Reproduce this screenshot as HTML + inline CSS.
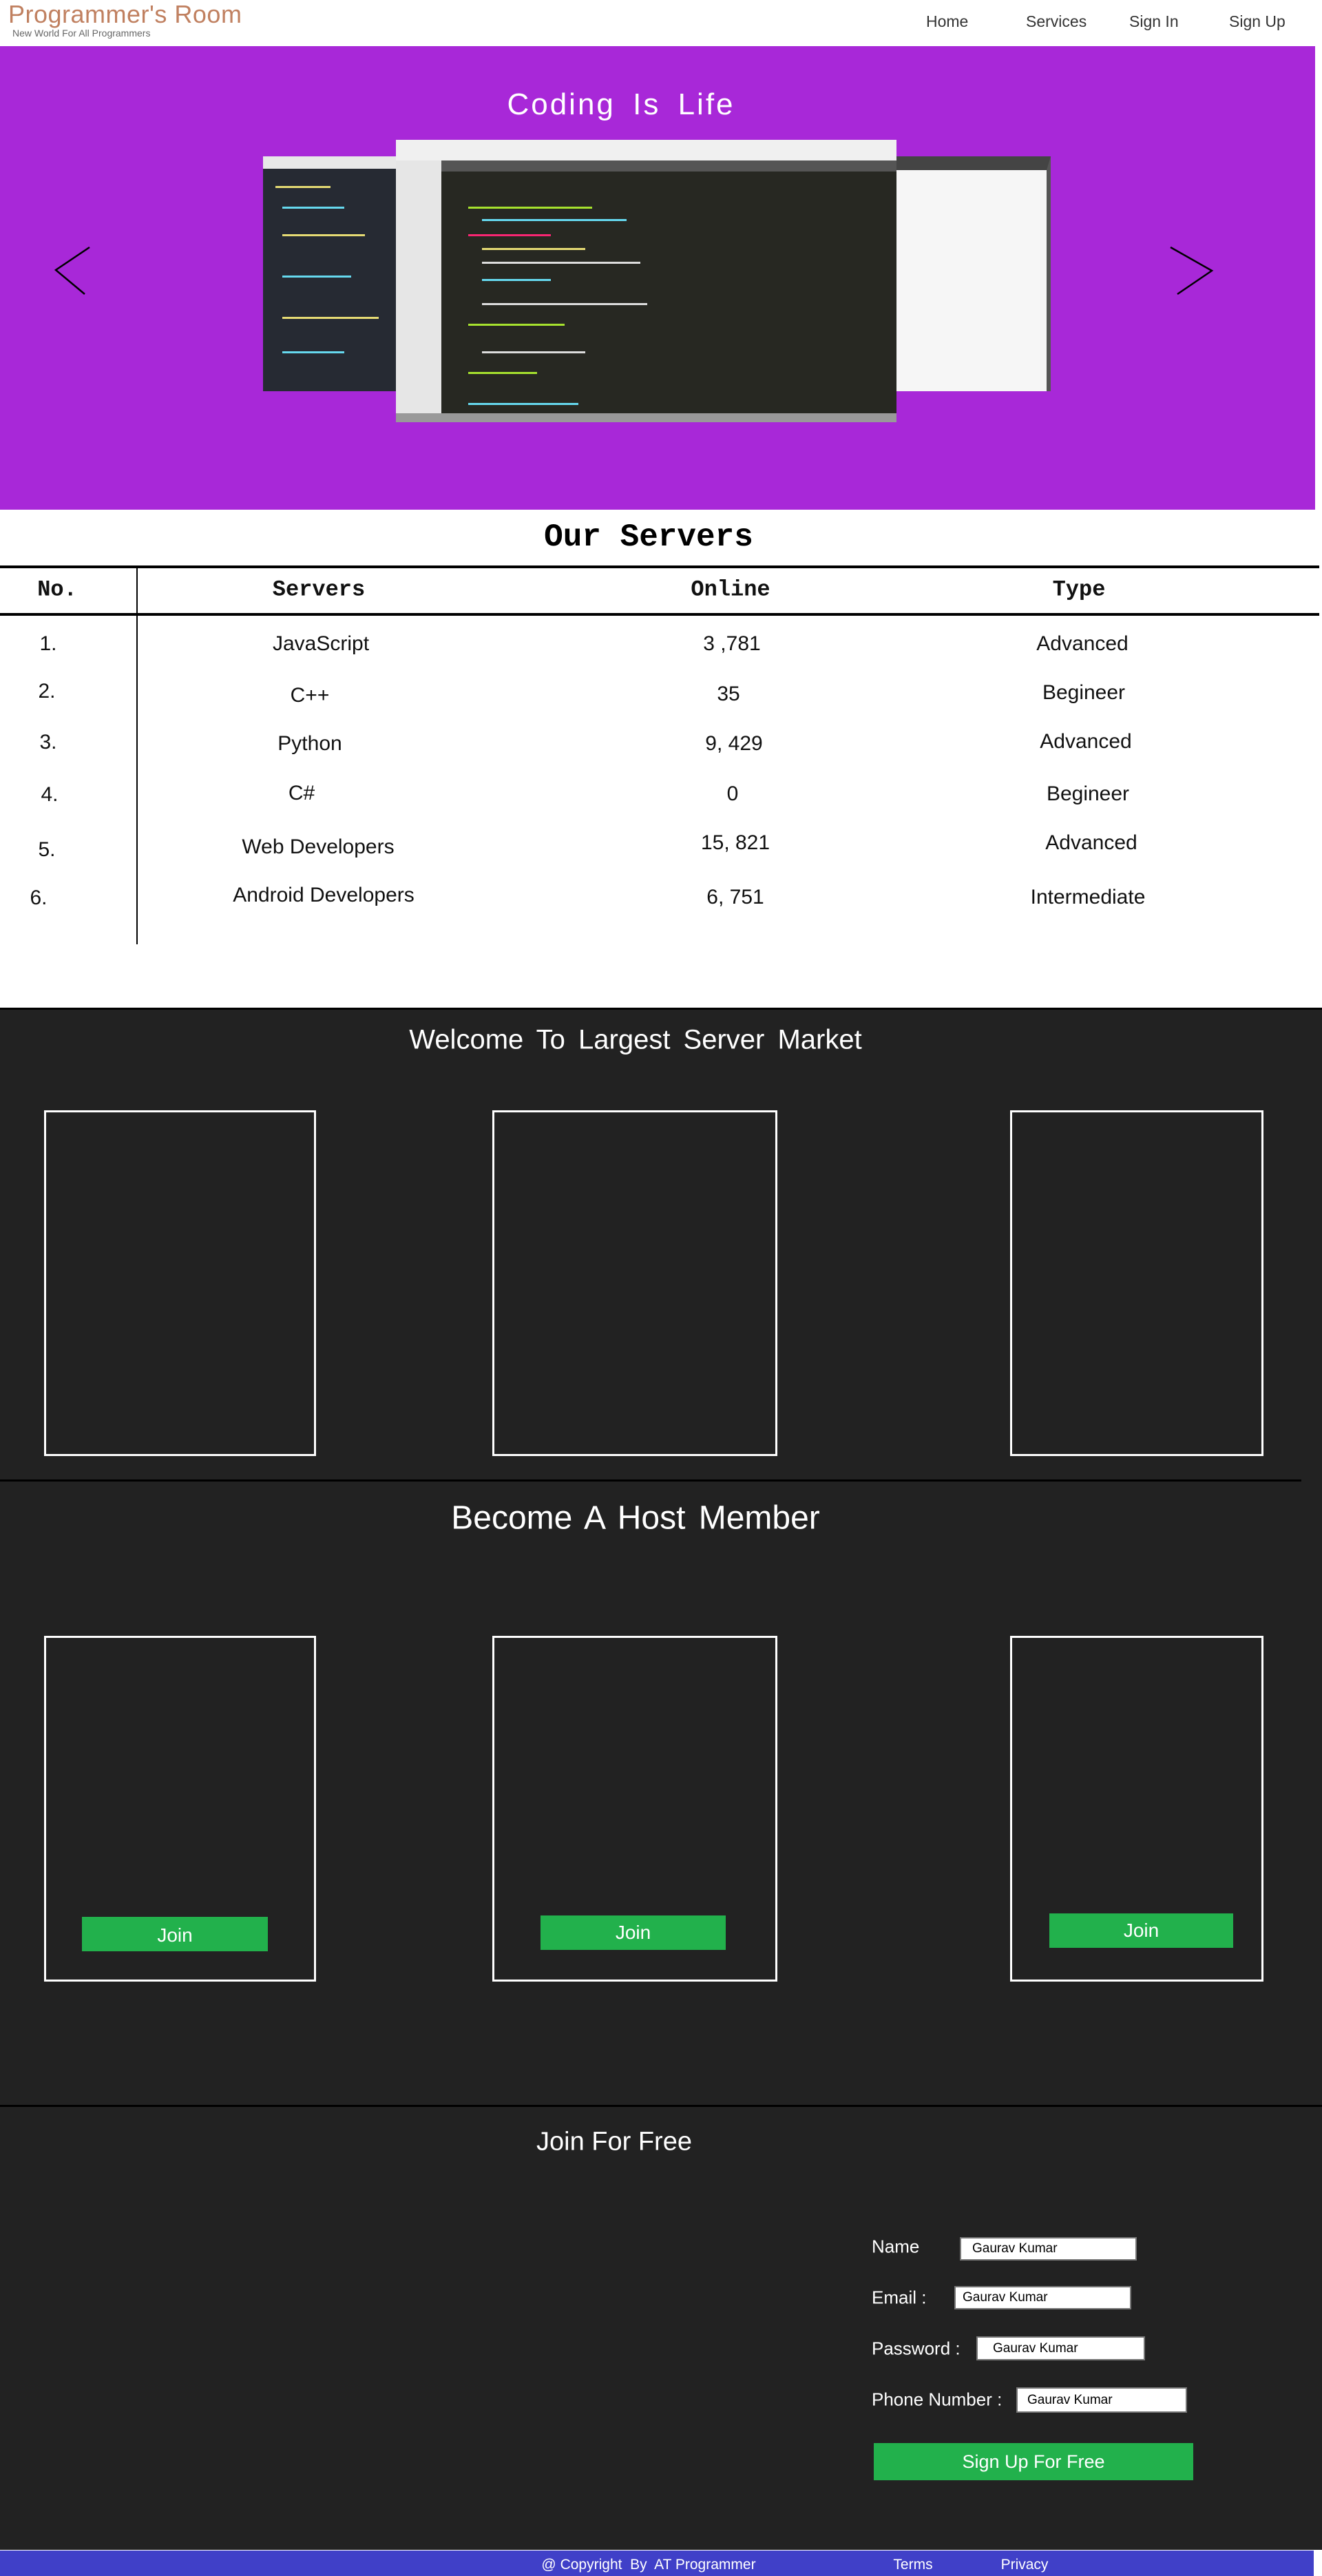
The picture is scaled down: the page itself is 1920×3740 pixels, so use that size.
<!DOCTYPE html>
<html><head><meta charset="utf-8">
<style>
*{margin:0;padding:0;box-sizing:border-box}
body{width:1920px;height:3740px;position:relative;background:#fff;font-family:"Liberation Sans","DejaVu Sans",sans-serif;overflow:hidden}
.a{position:absolute}
.c{position:absolute;transform:translate(-50%,-50%);white-space:nowrap}
.nav{font-size:23px;color:#333;top:18px}
.th{font-family:"Liberation Mono",monospace;font-weight:bold;font-size:32px;color:#111}
.td{font-size:30px;color:#111}
.card{position:absolute;border:3px solid #fff}
.join{position:absolute;background:#22b14c;color:#fff;font-size:28px;text-align:center}
.lbl{position:absolute;color:#fff;font-size:26px;transform:translateY(-50%)}
.inp{position:absolute;background:#fff;border:2px solid #777;font-size:19px;color:#000;padding-left:14px;display:flex;align-items:center}
.code{position:absolute;height:3px}
</style></head><body>
<div class="a" style="left:12px;top:0;font-size:36px;color:#c08060;letter-spacing:0.5px">Programmer's Room</div>
<div class="a" style="left:18px;top:40px;font-size:14px;color:#666">New World For All Programmers</div>
<div class="a nav" style="left:1345px">Home</div>
<div class="a nav" style="left:1490px">Services</div>
<div class="a nav" style="left:1640px">Sign In</div>
<div class="a nav" style="left:1785px">Sign Up</div>

<div class="a" style="left:0;top:67px;width:1910px;height:673px;background:#a828d8"></div>
<div class="c" style="left:902px;top:152px;font-size:44px;color:#fff;letter-spacing:3px;word-spacing:10px">Coding Is Life</div>
<svg class="a" style="left:75px;top:355px" width="60" height="75"><polyline points="55,4 6,37 48,72" fill="none" stroke="#000" stroke-width="2.5"/></svg>
<svg class="a" style="left:1695px;top:355px" width="70" height="75"><polyline points="5,4 65,38 15,72" fill="none" stroke="#000" stroke-width="2.5"/></svg>
<div class="a" style="left:382px;top:227px;width:200px;height:341px;background:#262a33"></div>
<div class="a" style="left:382px;top:227px;width:200px;height:18px;background:#e8e8e8"></div>
<div class="code" style="left:400px;top:270px;width:80px;background:#e6db74"></div>
<div class="code" style="left:410px;top:300px;width:90px;background:#66d9ef"></div>
<div class="code" style="left:410px;top:340px;width:120px;background:#e6db74"></div>
<div class="code" style="left:410px;top:400px;width:100px;background:#66d9ef"></div>
<div class="code" style="left:410px;top:460px;width:140px;background:#e6db74"></div>
<div class="code" style="left:410px;top:510px;width:90px;background:#66d9ef"></div>
<div class="a" style="left:1302px;top:227px;width:224px;height:341px;background:#f6f6f6;border-right:6px solid #555;border-top:20px solid #444"></div>
<div class="a" style="left:575px;top:203px;width:727px;height:410px;background:#272822"></div>
<div class="a" style="left:575px;top:203px;width:727px;height:30px;background:#f0f0f0"></div>
<div class="a" style="left:575px;top:233px;width:66px;height:370px;background:#e6e6e6"></div>
<div class="a" style="left:641px;top:233px;width:661px;height:16px;background:#555"></div>
<div class="a" style="left:575px;top:600px;width:727px;height:13px;background:#999"></div>
<div class="code" style="left:680px;top:300px;width:180px;background:#a6e22e"></div>
<div class="code" style="left:700px;top:318px;width:210px;background:#66d9ef"></div>
<div class="code" style="left:680px;top:340px;width:120px;background:#f92672"></div>
<div class="code" style="left:700px;top:360px;width:150px;background:#e6db74"></div>
<div class="code" style="left:700px;top:380px;width:230px;background:#ddd"></div>
<div class="code" style="left:700px;top:405px;width:100px;background:#66d9ef"></div>
<div class="code" style="left:700px;top:440px;width:240px;background:#ddd"></div>
<div class="code" style="left:680px;top:470px;width:140px;background:#a6e22e"></div>
<div class="code" style="left:700px;top:510px;width:150px;background:#ddd"></div>
<div class="code" style="left:680px;top:540px;width:100px;background:#a6e22e"></div>
<div class="code" style="left:680px;top:585px;width:160px;background:#66d9ef"></div>

<div class="c" style="left:942px;top:780px;font-family:'Liberation Mono',monospace;font-weight:bold;font-size:46px;color:#000">Our Servers</div>
<div class="a" style="left:0;top:821px;width:1916px;height:4px;background:#000"></div>
<div class="a" style="left:0;top:890px;width:1916px;height:4px;background:#000"></div>
<div class="a" style="left:198px;top:823px;width:2px;height:548px;background:#000"></div>
<div class="c th" style="left:83px;top:856px">No.</div>
<div class="c th" style="left:463px;top:856px">Servers</div>
<div class="c th" style="left:1061px;top:856px">Online</div>
<div class="c th" style="left:1567px;top:856px">Type</div>

<div class="c td" style="left:70px;top:935px">1.</div><div class="c td" style="left:466px;top:935px">JavaScript</div><div class="c td" style="left:1063px;top:935px">3 ,781</div><div class="c td" style="left:1572px;top:935px">Advanced</div>
<div class="c td" style="left:68px;top:1004px">2.</div><div class="c td" style="left:450px;top:1010px">C++</div><div class="c td" style="left:1058px;top:1008px">35</div><div class="c td" style="left:1574px;top:1006px">Begineer</div>
<div class="c td" style="left:70px;top:1078px">3.</div><div class="c td" style="left:450px;top:1080px">Python</div><div class="c td" style="left:1066px;top:1080px">9, 429</div><div class="c td" style="left:1577px;top:1077px">Advanced</div>
<div class="c td" style="left:72px;top:1154px">4.</div><div class="c td" style="left:438px;top:1152px">C#</div><div class="c td" style="left:1064px;top:1153px">0</div><div class="c td" style="left:1580px;top:1153px">Begineer</div>
<div class="c td" style="left:68px;top:1234px">5.</div><div class="c td" style="left:462px;top:1230px">Web Developers</div><div class="c td" style="left:1068px;top:1224px">15, 821</div><div class="c td" style="left:1585px;top:1224px">Advanced</div>
<div class="c td" style="left:56px;top:1304px">6.</div><div class="c td" style="left:470px;top:1300px">Android Developers</div><div class="c td" style="left:1068px;top:1303px">6, 751</div><div class="c td" style="left:1580px;top:1303px">Intermediate</div>

<div class="a" style="left:0;top:1463px;width:1920px;height:2239px;background:#222"></div>
<div class="a" style="left:0;top:1463px;width:1920px;height:3px;background:#000"></div>
<div class="c" style="left:923px;top:1510px;font-size:40px;color:#fff;word-spacing:8px">Welcome To Largest Server Market</div>
<div class="card" style="left:64px;top:1612px;width:395px;height:502px"></div>
<div class="card" style="left:715px;top:1612px;width:414px;height:502px"></div>
<div class="card" style="left:1467px;top:1612px;width:368px;height:502px"></div>
<div class="a" style="left:0;top:2148px;width:1890px;height:3px;background:#000"></div>
<div class="c" style="left:923px;top:2204px;font-size:48px;color:#fff;word-spacing:6px">Become A Host Member</div>
<div class="card" style="left:64px;top:2375px;width:395px;height:502px"></div>
<div class="card" style="left:715px;top:2375px;width:414px;height:502px"></div>
<div class="card" style="left:1467px;top:2375px;width:368px;height:502px"></div>
<div class="join" style="left:119px;top:2783px;width:270px;height:50px;line-height:54px">Join</div>
<div class="join" style="left:785px;top:2781px;width:269px;height:50px;line-height:50px">Join</div>
<div class="join" style="left:1524px;top:2778px;width:267px;height:50px;line-height:50px">Join</div>
<div class="a" style="left:0;top:3056px;width:1920px;height:3px;background:#000"></div>
<div class="c" style="left:892px;top:3110px;font-size:38px;color:#fff">Join For Free</div>

<div class="lbl" style="left:1266px;top:3262px">Name</div>
<div class="inp" style="left:1394px;top:3248px;width:257px;height:34px;padding-left:16px">Gaurav Kumar</div>
<div class="lbl" style="left:1266px;top:3336px">Email :</div>
<div class="inp" style="left:1386px;top:3319px;width:257px;height:34px;padding-left:10px">Gaurav Kumar</div>
<div class="lbl" style="left:1266px;top:3410px">Password :</div>
<div class="inp" style="left:1418px;top:3392px;width:245px;height:35px;padding-left:22px">Gaurav Kumar</div>
<div class="lbl" style="left:1266px;top:3484px">Phone Number :</div>
<div class="inp" style="left:1476px;top:3466px;width:248px;height:37px;padding-left:14px">Gaurav Kumar</div>
<div class="join" style="left:1269px;top:3547px;width:464px;height:54px;line-height:54px;font-size:27px">Sign Up For Free</div>

<div class="a" style="left:0;top:3702px;width:1908px;height:38px;background:#4040c8;border-top:1px solid #fff"></div>
<div class="c" style="left:942px;top:3724px;font-size:21px;color:#fff">@ Copyright&nbsp; By&nbsp; AT Programmer</div>
<div class="c" style="left:1326px;top:3724px;font-size:21px;color:#fff">Terms</div>
<div class="c" style="left:1488px;top:3724px;font-size:21px;color:#fff">Privacy</div>
</body></html>
